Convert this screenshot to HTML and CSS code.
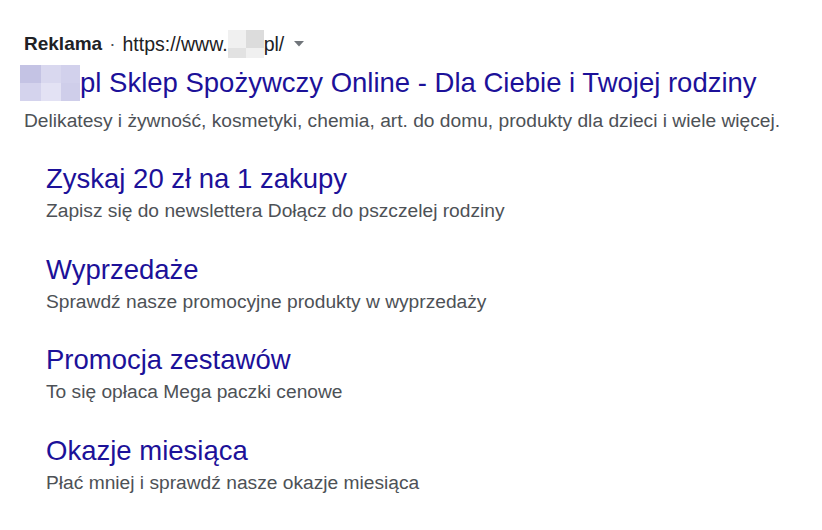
FILE: index.html
```html
<!DOCTYPE html>
<html lang="pl">
<head>
<meta charset="utf-8">
<link rel="stylesheet" href="styles.css">
</head>
<body>
<div class="ad">
  <div class="meta">
    <span class="label">Reklama</span>
    <span class="dot">·</span>
    <span class="url">https://www.<span class="blur-url"><i></i><i></i></span>pl/</span>
    <svg class="caret" width="10" height="6" viewBox="0 0 10 6"><path d="M0 0h10L5 5.5z" fill="#70757a"/></svg>
  </div>
  <div class="title"><span class="blur-title"><i></i><i></i><i></i><i></i><i></i><i></i></span>pl Sklep Spożywczy Online - Dla Ciebie i Twojej rodziny</div>
  <div class="desc">Delikatesy i żywność, kosmetyki, chemia, art. do domu, produkty dla dzieci i wiele więcej.</div>
  <div class="sitelinks">
    <div class="sl">
      <div class="sl-title">Zyskaj 20 zł na 1 zakupy</div>
      <div class="sl-desc">Zapisz się do newslettera Dołącz do pszczelej rodziny</div>
    </div>
    <div class="sl">
      <div class="sl-title">Wyprzedaże</div>
      <div class="sl-desc">Sprawdź nasze promocyjne produkty w wyprzedaży</div>
    </div>
    <div class="sl">
      <div class="sl-title">Promocja zestawów</div>
      <div class="sl-desc">To się opłaca Mega paczki cenowe</div>
    </div>
    <div class="sl">
      <div class="sl-title">Okazje miesiąca</div>
      <div class="sl-desc">Płać mniej i sprawdź nasze okazje miesiąca</div>
    </div>
  </div>
</div>
</body>
</html>
```
FILE: styles.css
```css
html, body { margin: 0; padding: 0; background: #fff; }
body { font-family: "Liberation Sans", Arial, sans-serif; }
.ad { padding: 30px 0 0 24px; }
.meta { display: flex; align-items: center; height: 28px; font-size: 19px; color: #202124; }
.label { font-weight: bold; }
.dot { margin: 0 7px; color: #4d5156; }
.url { color: #202124; display: flex; align-items: center; font-size: 19.5px; }
.blur-url { display: inline-grid; grid-template-columns: 18px 18px; grid-template-rows: 18px 10px; width: 36px; height: 28px; }
.blur-url i:nth-child(1) { background: #dcdcdc; }
.blur-url i:nth-child(2) { background: #e2e2e2; }
.blur-url::before, .blur-url::after { content: ""; background: #f0f0f0; }
.caret { margin-left: 10px; }
.title { display: flex; align-items: center; margin-left: -4px; margin-top: 7px; height: 36px; font-size: 27.5px; color: #1c1199; }
.blur-title { display: grid; grid-template-columns: 21px 20px 19px; grid-template-rows: 18px 18px; width: 60px; height: 36px; }
.blur-title i:nth-child(1) { background: #c4c3e4; }
.blur-title i:nth-child(2) { background: #d9d8ef; }
.blur-title i:nth-child(3) { background: #d2d1ec; }
.blur-title i:nth-child(4) { background: #d4d3ed; }
.blur-title i:nth-child(5) { background: #e3e2f4; }
.blur-title i:nth-child(6) { background: #cfceea; }
.desc { margin-top: 7px; font-size: 19.2px; line-height: 26px; color: #4d5156; }
.sitelinks { padding-left: 22px; margin-top: 28px; display: flex; flex-direction: column; gap: 26.5px; }
.sl-title { font-size: 27.5px; line-height: 34px; color: #1c1199; }
.sl-desc { font-size: 19.2px; line-height: 30px; color: #4d5156; }
```
